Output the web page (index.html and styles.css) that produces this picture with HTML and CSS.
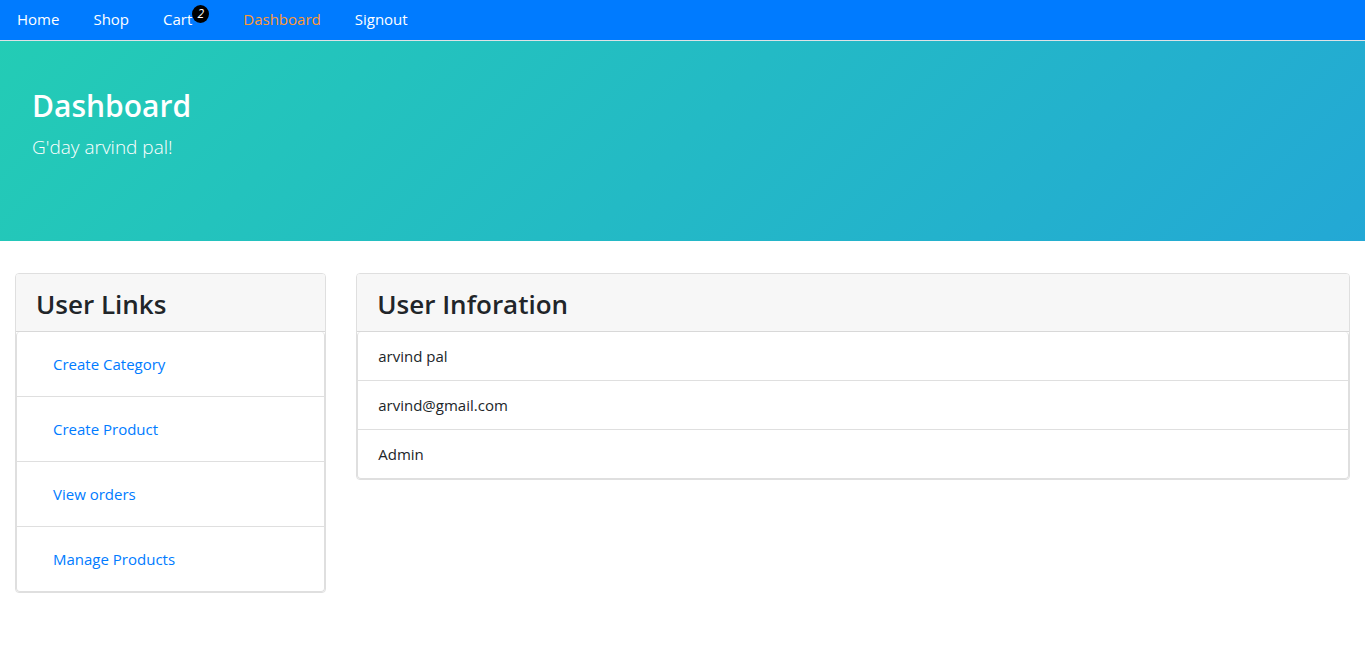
FILE: index.html
```
<!DOCTYPE html>
<html lang="en">
<head>
<meta charset="utf-8">
<title>Dashboard</title>
<meta name="viewport" content="width=device-width, initial-scale=1">
<link rel="stylesheet" href="styles.css">
</head>
<body>
<nav class="nav">
  <a class="nav-link" href="#">Home</a>
  <a class="nav-link" href="#">Shop</a>
  <a class="nav-link nav-cart" href="#">Cart<sup class="cart-badge">2</sup></a>
  <a class="nav-link active" href="#">Dashboard</a>
  <a class="nav-link" href="#">Signout</a>
</nav>
<header class="hero">
  <h2 class="hero-title">Dashboard</h2>
  <p class="hero-lead">G'day arvind pal!</p>
</header>
<main class="row">
  <div class="col col-side">
    <section class="card">
      <h3 class="card-header">User Links</h3>
      <ul class="list">
        <li class="item"><a class="item-link" href="#">Create Category</a></li>
        <li class="item"><a class="item-link" href="#">Create Product</a></li>
        <li class="item"><a class="item-link" href="#">View orders</a></li>
        <li class="item"><a class="item-link" href="#">Manage Products</a></li>
      </ul>
    </section>
  </div>
  <div class="col col-main">
    <section class="card">
      <h3 class="card-header">User Inforation</h3>
      <ul class="list">
        <li class="item">arvind pal</li>
        <li class="item">arvind@gmail.com</li>
        <li class="item">Admin</li>
      </ul>
    </section>
  </div>
</main>
</body>
</html>
```
FILE: styles.css
```
* { box-sizing: border-box; }
body {
  margin: 0;
  background: #fff;
  color: #212529;
  font: 15px/24px "Segoe UI", "Open Sans", "Noto Sans", sans-serif;
}
h2, h3, p, ul { margin: 0; }
a { color: #007bff; text-decoration: none; }
.nav {
  display: flex;
  background: #007bff;
  border-bottom: 1px solid #dee2e6;
}
.nav-link {
  padding: 7px 17px 9px;
  color: #fff;
}
.nav-link.active { color: #ff9933; }
.nav-cart { display: flex; }
.cart-badge {
  width: 17px;
  height: 18px;
  margin-top: -2px;
  border-radius: 50%;
  background: #000;
  font-size: 12px;
  font-style: italic;
  line-height: 18px;
  text-align: center;
}
.hero {
  min-height: 200px;
  padding: 44px 32px;
  background: linear-gradient(135deg, #23ccb5, #23a8d5);
  color: #fff;
}
.hero-title { font-size: 30px; font-weight: 600; line-height: 42px; margin-bottom: 5px; }
.hero-lead { font-size: 19px; font-weight: 300; line-height: 30px; }
.row {
  display: flex;
  align-items: flex-start;
  padding: 32px 0;
}
.col { padding: 0 15px; }
.col-side { width: 25%; }
.col-main { width: 75%; }
.card { border: 1px solid #dfdfdf; border-radius: 4px; }
.card-header {
  padding: 14px 20px 10px;
  background: #f7f7f7;
  border-bottom: 1px solid #d8d8d8;
  border-radius: 3px 3px 0 0;
  font-size: 26px;
  font-weight: 600;
  line-height: 33px;
}
.list {
  padding: 0;
  list-style: none;
  border: 1px solid #dfdfdf;
  border-top: 0;
  border-radius: 4px;
}
.item { padding: 12px 20px; }
.item + .item { border-top: 1px solid #dfdfdf; }
.item-link { display: block; padding: 8px 16px; }
```
